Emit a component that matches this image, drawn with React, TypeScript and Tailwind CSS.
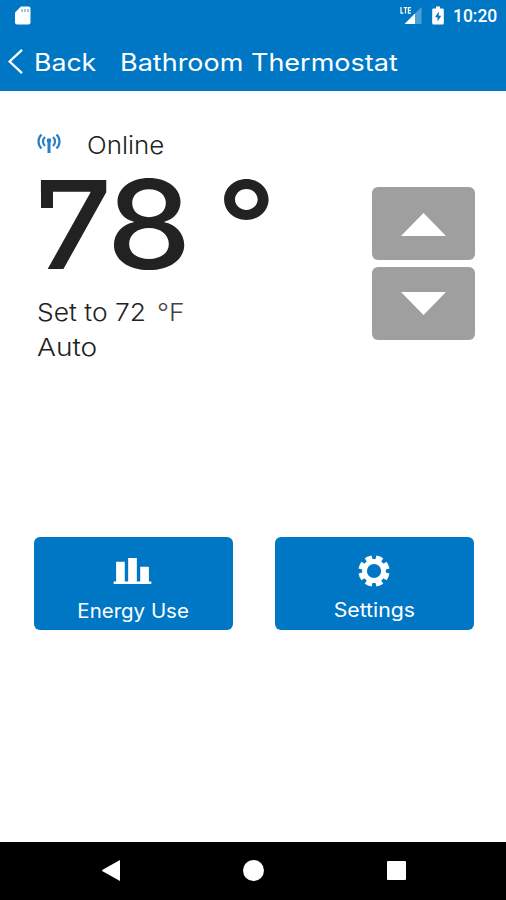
import type { ReactNode } from "react";

function StatusBar() {
  return (
    <div className="flex h-[31px] items-center justify-between pl-[15px] pr-[9px]">
      <svg className="h-[19px] w-4" viewBox="0 0 16 19" fill="none">
        <path d="M6 .5h7.500a2 2 0 0 1 2 2v14a2 2 0 0 1-2 2H2a2 2 0 0 1-2-2V6.500Z" fill="#fff" />
        <path d="M7 3v3M10 3v3M13 3v3" stroke="#0077c5" strokeWidth="1.200" opacity=".65" />
      </svg>
      <div className="flex items-center">
        <svg className="h-[19px] w-[22px]" viewBox="0 0 22 19" fill="none">
          <path d="M21.500 1v17h-17Z" fill="#fff" opacity=".3" />
          <path d="M15 7.500V18H4.500Z" fill="#fff" />
          <path d="M1 1v6.200h2.400M3.800 1.600h3.400M5.500 1.600v6M11 1.600H8.400v5.600H11M8.400 4.300h2.400" stroke="#fff" strokeWidth="1.200" />
        </svg>
        <svg className="ml-2.5 h-[19px] w-3" viewBox="0 0 12 19">
          <path d="M4 .5h4v2h2.500a1.300 1.300 0 0 1 1.300 1.300v13.400a1.300 1.300 0 0 1-1.300 1.300h-9A1.300 1.300 0 0 1 .2 17.200V3.800a1.300 1.300 0 0 1 1.300-1.300H4Z" fill="#fff" />
          <path d="M6.800 5.500v4.300h2.500L5.500 15.500v-4.300H3Z" fill="#0077c5" />
        </svg>
        <span className="ml-[9px] w-[44px] origin-left scale-x-[0.970] whitespace-nowrap font-[Roboto,sans-serif] text-[18px] font-medium leading-[31px]">
          10:20
        </span>
      </div>
    </div>
  );
}

function Header() {
  return (
    <div className="flex h-[61px] items-center pl-2">
      <svg className="h-[26px] w-[15px]" viewBox="0 0 15 26" fill="none" stroke="#fff" strokeWidth="2.300">
        <path d="M14 0.800 1.600 12.500 14 24.200" />
      </svg>
      <span className="mt-[2px] ml-[11px] w-[86px] origin-left scale-x-[1.110] whitespace-nowrap text-[24px]">Back</span>
      <span className="mt-[2px] origin-left scale-x-[1.125] whitespace-nowrap text-[24px]">Bathroom Thermostat</span>
    </div>
  );
}

function SignalIcon() {
  return (
    <svg className="mb-[5px] h-[22px] w-6" viewBox="0 0 24 22" fill="none" stroke="#2a7fc4" strokeWidth="2.200">
      <path d="M4.500 2.500C.5 6.500.5 12.500 4.500 16.500M19.500 2.500c4 4 4 10 0 14M8 5c-2.700 2.500-2.700 6.500 0 9M16 5c2.700 2.500 2.700 6.500 0 9" />
      <circle cx="12" cy="8.500" r="2.300" fill="#2a7fc4" stroke="none" />
      <path d="M12 9v12" strokeWidth="3" />
    </svg>
  );
}

function GearIcon() {
  return (
    <svg className="h-[32px] w-[32px]" viewBox="-16 -16 32 32">
      {[0, 45, 90, 135, 180, 225, 270, 315].map((a) => (
        <path key={a} d="M-2.800-9.500-3.700-15.200Q0-16 3.700-15.200L2.800-9.500Z" fill="#fff" transform={`rotate(${a + 22.5})`} />
      ))}
      <circle r="9.500" fill="none" stroke="#fff" strokeWidth="4.800" />
    </svg>
  );
}

function ActionButton({ children }: { children: ReactNode }) {
  return (
    <button className="flex h-[93px] w-[198.500px] flex-col items-center rounded-[6px] bg-[#0077c5] text-white">
      {children}
    </button>
  );
}

export default function App() {
  return (
    <div className="flex h-[900px] w-[506px] flex-col overflow-hidden bg-white font-[Inter,sans-serif] text-[#222]">
      <header className="h-[91.400px] shrink-0 bg-[#0077c5] text-white">
        <StatusBar />
        <Header />
      </header>

      <main className="grow">
        <section className="flex h-[446px] justify-between pl-[37px] pr-[31px]">
          <div className="pt-[39.600px]">
            <div className="flex h-[30px] items-center">
              <SignalIcon />
              <span className="ml-[26px] origin-left scale-x-[1.080] whitespace-nowrap text-[24px] font-light">Online</span>
            </div>
            <div className="flex h-[128px] w-[240px] items-center text-[123px] font-[450] leading-[128px]">
              <span className="relative w-[72px]">
                <span className="block origin-left -translate-x-[2px] scale-x-[1.100]">7</span>
                <span className="absolute left-1 top-[20px] h-[27px] w-[12px] bg-[#222]" />
              </span>
              <span className="w-[110px] origin-left -translate-x-[2.500px] scale-x-[1.100]">8</span>
              <span className="origin-left -translate-x-[3px] scale-x-[1.080] font-medium">°</span>
            </div>
            <div className="flex h-[48px] items-center text-[24px] font-light">
              <span className="w-[120px] origin-left scale-x-[1.100] whitespace-nowrap">Set to 72</span>
              <span className="origin-left scale-x-[1.100] text-[#444]">°F</span>
            </div>
            <div className="flex h-[23px] items-center text-[24px] font-light">
              <span className="origin-left scale-x-[1.170]">Auto</span>
            </div>
          </div>
          <div className="flex flex-col gap-[7.500px] pt-[96.100px]">
            <button className="flex h-[72.500px] w-[103.500px] items-center justify-center rounded-[6px] bg-[#9f9f9f]">
              <svg className="mt-[2px] h-[23px] w-[45px]" viewBox="0 0 45 23" fill="#fff"><path d="M22.500 0 45 23H0Z" /></svg>
            </button>
            <button className="flex h-[72.500px] w-[103.500px] items-center justify-center rounded-[6px] bg-[#9f9f9f]">
              <svg className="h-[23px] w-[45px]" viewBox="0 0 45 23" fill="#fff"><path d="M0 0h45L22.500 23Z" /></svg>
            </button>
          </div>
        </section>

        <section className="flex gap-[42.500px] pl-[34px]">
          <ActionButton>
            <svg className="mt-5 mr-[2px] h-[27px] w-[39px]" viewBox="0 0 39 28" fill="#fff">
              <path d="M0 25.300h39V28H0ZM2.500 5h9v21h-9ZM15 1h9v25h-9ZM27.500 10h9v16h-9Z" />
            </svg>
            <span className="mt-[17px] scale-x-[1.050] text-[19.500px] leading-[20px]">Energy Use</span>
          </ActionButton>
          <ActionButton>
            <div className="mt-[18px] mr-px"><GearIcon /></div>
            <span className="mt-[13px] scale-x-[1.090] text-[19.500px] leading-[20px]">Settings</span>
          </ActionButton>
        </section>
      </main>

      <nav className="flex h-[58.500px] shrink-0 items-center justify-between bg-black pl-[102px] pr-[100px]">
        <svg className="h-[21px] w-[18px]" viewBox="0 0 18 21" fill="#fff"><path d="M18 0v21L.600 11.300a1 1 0 0 1 0-1.600Z" /></svg>
        <span className="h-[21px] w-[21px] rounded-full bg-white" />
        <span className="h-[19px] w-[19px] rounded-[1px] bg-white" />
      </nav>
    </div>
  );
}
